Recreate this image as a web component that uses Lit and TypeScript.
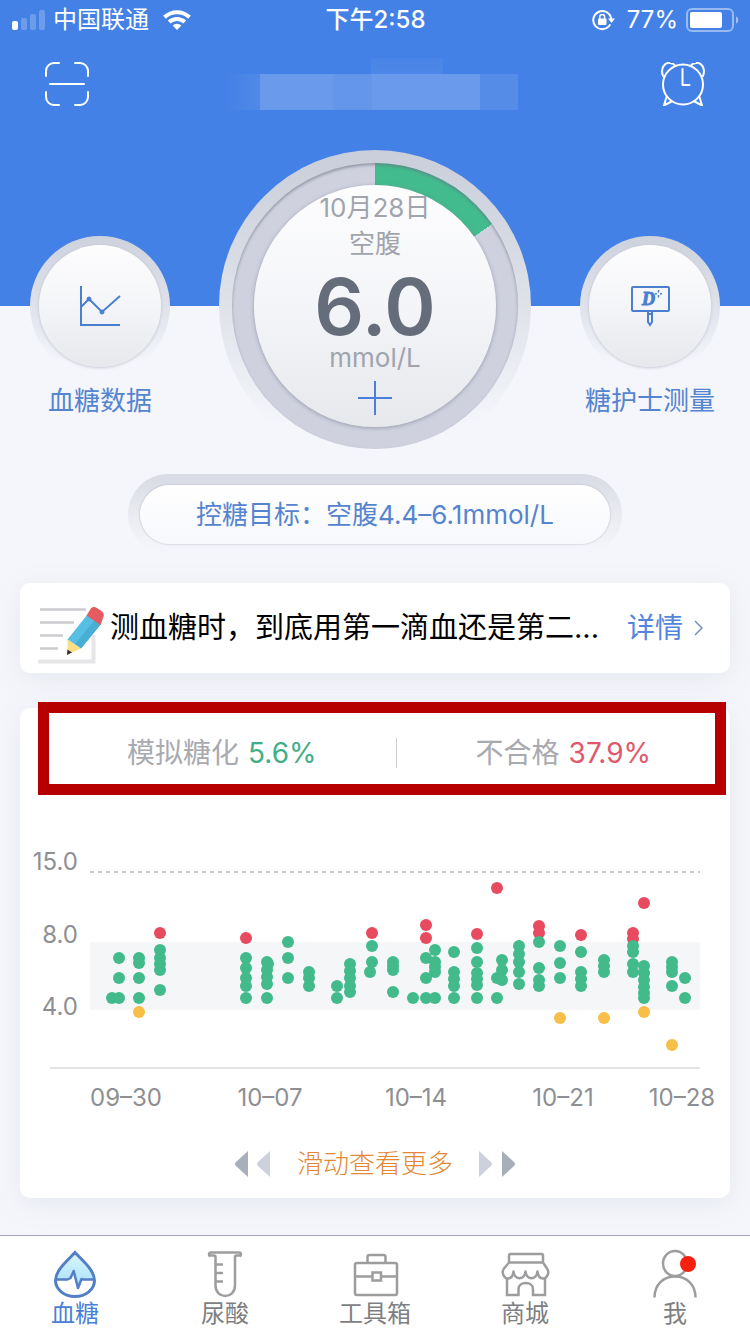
import { LitElement, html, svg, css } from "lit";
import { customElement, property } from "lit/decorators.js";
import { classMap } from "lit/directives/class-map.js";

type Level = "ok" | "high" | "low";
interface Column { x: number; ok?: number[]; high?: number[]; low?: number[]; }

const COLUMNS: Column[] = [
  { x: 92, ok: [158] },
  { x: 99, ok: [118, 138, 158] },
  { x: 119, ok: [118, 123, 138, 158], low: [172] },
  { x: 140, high: [93], ok: [110, 118, 124, 130, 150] },
  { x: 226, high: [98], ok: [118, 128, 138, 146, 158] },
  { x: 247, ok: [122, 130, 137, 144, 158] },
  { x: 248, ok: [124] },
  { x: 268, ok: [102, 118, 138] },
  { x: 289, ok: [132, 138, 146] },
  { x: 317, ok: [146, 158] },
  { x: 330, ok: [124, 131, 138, 146, 152] },
  { x: 350, ok: [132] },
  { x: 352, high: [93], ok: [106, 122] },
  { x: 373, ok: [122, 126, 130, 152] },
  { x: 393, ok: [158] },
  { x: 406, high: [85, 98], ok: [118, 138, 158] },
  { x: 415, ok: [110, 122, 127, 132, 158] },
  { x: 434, ok: [112, 132, 139, 146, 158] },
  { x: 457, high: [94], ok: [108, 122, 133, 139, 145, 158] },
  { x: 477, high: [48], ok: [138, 158] },
  { x: 482, ok: [120, 130, 140] },
  { x: 499, ok: [106, 114, 122, 132, 144] },
  { x: 519, high: [86, 93], ok: [102, 128, 140, 146] },
  { x: 540, ok: [106, 123, 138], low: [178] },
  { x: 561, high: [95], ok: [112, 132, 139, 146] },
  { x: 584, ok: [120, 126, 132], low: [178] },
  { x: 613, high: [93, 99], ok: [106, 112, 124, 132] },
  { x: 624, high: [63], ok: [126, 133, 140, 147, 153, 158], low: [172] },
  { x: 652, ok: [122, 127, 132, 146], low: [205] },
  { x: 665, ok: [138, 158] },
];
const LEVELS: Level[] = ["high", "ok", "low"];

@customElement("status-bar")
class StatusBar extends LitElement {
  static styles = css`
    :host { display: flex; align-items: center; height: 40px; padding: 0 11px 0 12px; color: #fff; font-size: 24px; line-height: 32px; }
    .side { flex: 1; display: flex; align-items: center; gap: 8px; }
    .end { justify-content: flex-end; }
    .carrier { margin-right: 6px; }
    .time { font-weight: 500; }
    .percent { margin-left: 4px; }
    svg { display: block; flex: none; }
  `;
  render() {
    return html`
      <div class="side">
        <svg width="33" height="22" viewBox="0 0 33 22" fill="#fff">
          <rect x="0" y="12" width="6" height="9" rx="2"/>
          <g fill-opacity=".22"><rect x="9" y="9" width="6" height="12" rx="2"/><rect x="18" y="5" width="6" height="16" rx="2"/><rect x="27" y="1" width="6" height="20" rx="2"/></g>
        </svg>
        <span class="carrier">中国联通</span>
        <svg width="28" height="20" viewBox="0 0 28 20" fill="none" stroke="#fff" stroke-width="4">
          <path d="M1.5 7.2a18 18 0 0 1 25 0"/><path d="M6.2 12a11.3 11.3 0 0 1 15.6 0"/>
          <path d="M14 20l-4.4-4.4a6.4 6.4 0 0 1 8.8 0z" fill="#fff" stroke="none"/>
        </svg>
      </div>
      <span class="time">下午2:58</span>
      <div class="side end">
        <svg width="23" height="22" viewBox="0 0 23 22" fill="none" stroke="#fff" stroke-width="2">
          <path d="M18.200 15.400A9 9 0 1 1 19.200 10"/><path d="M16 9.500h7l-3.500 4.500z" fill="#fff" stroke="none"/>
          <rect x="6" y="9.500" width="8.500" height="6.500" rx="1" fill="#fff" stroke="none"/><path d="M7.800 10V7.800a2.400 2.400 0 0 1 4.800 0V10" stroke-width="1.500"/>
        </svg>
        <span class="percent">77%</span>
        <svg width="53" height="24" viewBox="0 0 53 24">
          <rect x="1" y="1" width="46" height="22" rx="5" fill="none" stroke="#fff" stroke-opacity=".45" stroke-width="2"/>
          <rect x="4" y="4" width="32" height="16" rx="2" fill="#fff"/>
          <path d="M50 8.500c3 1 3 6 0 7z" fill="#fff" fill-opacity=".5"/>
        </svg>
      </div>`;
  }
}

@customElement("glucose-chart")
class GlucoseChart extends LitElement {
  static styles = css`
    :host { display: block; }
    svg { display: block; width: 100%; }
    text { font-size: 24px; fill: #8e8f93; }
    .band { fill: #f5f6f8; }
    .limit { stroke: #c8c8cc; stroke-width: 2; stroke-dasharray: 4 4; }
    .axis { stroke: #e3e3e5; stroke-width: 2; }
    .ok { fill: #42ba8c; }
    .high { fill: #e84a5f; }
    .low { fill: #f8bf48; }
  `;
  render() {
    const yLabels: [string, number][] = [["15.0", 30], ["8.0", 103], ["4.0", 175]];
    const xLabels: [string, number][] = [["09–30", 106], ["10–07", 250], ["10–14", 396], ["10–21", 543], ["10–28", 662]];
    return html`<svg viewBox="0 0 710 280" role="img" aria-label="血糖">
      <rect class="band" x="70" y="102" width="610" height="68"/>
      <path class="limit" d="M70 32H680"/>
      <path class="axis" d="M30 228H680"/>
      ${yLabels.map(([t, y]) => svg`<text x="58" y=${y} text-anchor="end">${t}</text>`)}
      ${xLabels.map(([t, x]) => svg`<text x=${x} y="266" text-anchor="middle">${t}</text>`)}
      ${COLUMNS.map(c => LEVELS.map(l => (c[l] ?? []).map(y => svg`<circle class=${l} cx=${c.x} cy=${y} r="6"/>`)))}
    </svg>`;
  }
}

@customElement("tab-item")
class TabItem extends LitElement {
  @property() label = "";
  @property() icon = "";
  @property({ type: Boolean }) active = false;
  static styles = css`
    :host { flex: 1; display: block; }
    a { display: flex; flex-direction: column; align-items: center; padding: 14px 0 4px; text-decoration: none; color: #7e7f82; font-size: 24px; line-height: 32px; }
    a.active { color: #4a80d6; }
    svg { display: block; overflow: visible; fill: none; stroke: #9d9d9f; stroke-width: 3; }
  `;
  private glyph() {
    switch (this.icon) {
      case "drop": return svg`
        <defs><linearGradient id="d" x1="0" y1="0" x2="0" y2="1"><stop offset="0" stop-color="#d8f6fd"/><stop offset="1" stop-color="#a9e0f8"/></linearGradient></defs>
        <path d="M24 3C19 10 5 20 5 29h15l3-7 4 16 4-9h12C43 20 29 10 24 3z" fill="url(#d)" stroke="none"/>
        <path d="M24 2.500C17 10 4.500 20 4.500 30.500a19.500 16 0 0 0 39 0C43.500 20 31 10 24 2.500z" stroke="#527fc6"/>
        <path d="M5 29.500h11.500l3-1.500 3.200-7 4.300 17 3.500-9 2 .5H43" stroke="#527fc6" stroke-width="2.500" stroke-linejoin="round"/>`;
      case "tube": return svg`
        <path d="M9 6.500C7.500 5 7.500 2.500 10 2.500h28c2.500 0 2.500 2.500 1 4M9 5.500h4c1 0 1.500.5 1.500 1.500V35.500c0 14 19.500 14 19.500 0V7c0-1 .5-1.500 1.500-1.500h3.500" stroke-width="2.500"/>
        <path d="M14.500 14.500H22M14.500 23H22M14.500 31.500H22" stroke-width="2.500"/>`;
      case "case": return svg`
        <rect x="4" y="13" width="42" height="32" rx="2" stroke-width="2.500"/>
        <path d="M16.500 13V7c0-1.500.8-2 2-2h14c1.200 0 2 .5 2 2v6M4 26.500h17.500M30 26.500h16" stroke-width="2.500"/>
        <rect x="21.500" y="22.500" width="8.500" height="8" stroke-width="2.500"/>`;
      case "shop": return svg`
        <rect x="8" y="4" width="34" height="8.500" rx="1.500" stroke-width="2.500"/>
        <path d="M8 12.500L3 18.500c-3 4 0 10 4 10 4 0 5-3 5.500-7 1 9 11 9 12 0 1 9 11 9 12 0 .5 4 1.500 7 5.500 7 4 0 7-6 4-10L42 12.500" stroke-width="2.500" stroke-linejoin="round"/>
        <path d="M6 28v17h11.500V39c0-8 14.500-8 14.500 0v6h12V28" stroke-width="2.500"/>`;
      default: return svg`
        <ellipse cx="24" cy="13.500" rx="12" ry="12.500" stroke-width="2.500"/>
        <path d="M3.500 47.500c0-13 9-21 20.500-21s20.500 8 20.500 21" stroke-width="2.500"/>
        <circle cx="37" cy="14" r="8" fill="#f5200f" stroke="none"/>`;
    }
  }
  render() {
    return html`<a href="#" class=${classMap({ active: this.active })}>
      <svg width="48" height="48" viewBox="0 0 48 48">${this.glyph()}</svg>${this.label}</a>`;
  }
}

@customElement("app-root")
class AppRoot extends LitElement {
  static styles = css`
    :host {
      display: flex; flex-direction: column; min-height: 100vh; box-sizing: border-box;
      background: linear-gradient(#4481e6 306px, #f4f6fb 306px);
      font-family: Inter, "Noto Sans CJK SC", sans-serif; font-weight: 400;
    }
    *, *::before, *::after { box-sizing: border-box; }
    button { appearance: none; border: 0; padding: 0; margin: 0; background: none; color: inherit; font: inherit; }
    svg { display: block; flex: none; }
    .header { display: flex; align-items: center; justify-content: space-between; height: 88px; padding: 0 45px; }
    .blurred {
      width: 293px; height: 52px; margin-right: 8px;
      background:
        linear-gradient(90deg, transparent 0, #fff1 12%, #fff3 12%, #fff3 37%, #ffffff2b 37%, #ffffff2b 50%, #fff3 50%, #fff3 87%, #ffffff17 87%) 0 100% / 100% 36px no-repeat,
        linear-gradient(#ffffff08, #ffffff0c) 146px 0 / 72px 16px no-repeat;
    }
    .hero { display: grid; grid-template-columns: 200px 1fr 200px; margin-top: 22px; }
    .shortcut { display: flex; flex-direction: column; align-items: center; padding-top: 86px; color: #5584cf; font-size: 26px; line-height: 34px; gap: 8px; }
    .knob { width: 140px; height: 140px; border-radius: 50%; display: grid; place-items: center; background: linear-gradient(#ced2dd, #dfe2ea 50%, #f4f6fb 90%); }
    .face { border-radius: 50%; display: flex; flex-direction: column; align-items: center; background: linear-gradient(#fdfdfe, #f4f5f8 50%, #e6e8ec); }
    .knob .face { width: 122px; height: 122px; justify-content: center; box-shadow: 0 1px 3px #9a9eac88; }
    .dial { justify-self: center; width: 312px; height: 312px; border-radius: 50%; display: grid; place-items: center; background: linear-gradient(#c9ceda, #dfe2e9 50%, #f4f6fb 88%); }
    .ring { width: 286px; height: 286px; border-radius: 50%; display: grid; place-items: center; background: conic-gradient(#42bb8e 55deg, #cfd1df 55deg); box-shadow: inset 0 2px 3px #6d728299; }
    .ring .face { width: 242px; height: 242px; padding-top: 5px; color: #a0a4ad; font-size: 26px; line-height: 36px; box-shadow: 0 1px 4px #7d8292aa; }
    .value { margin-top: 6px; font-size: 78px; line-height: 78px; font-weight: 600; color: #656d7b; }
    .unit { line-height: 24px; }
    .plus { margin-top: 11px; }
    .target { align-self: center; margin-top: 12px; padding: 11px 12px; border-radius: 40px; background: linear-gradient(#d9dbe4, #e9ebf1 50%, #f4f6fb 95%); }
    .target-face { display: block; height: 59px; padding: 0 56px; border-radius: 30px; background: linear-gradient(#fff, #f7f8fc); box-shadow: 0 0 2px #a3a8b6; font-size: 26px; line-height: 59px; color: #5584cf; white-space: nowrap; }
    .card { margin: 0 20px; background: #fff; border-radius: 10px; box-shadow: 0 6px 28px #888ca61f; }
    .news { margin-top: 28px; height: 90px; padding: 0 27px 0 18px; display: flex; align-items: center; font-size: 28px; line-height: 40px; text-decoration: none; color: #000; white-space: nowrap; }
    .title { flex: 1; margin-left: 4px; font-size: 29px; }
    .more { color: #5584dc; margin-right: 11px; }
    .report { margin-top: 35px; }
    .stats { position: relative; display: flex; align-items: center; justify-content: space-between; height: 90px; padding: 0 79px 0 107px; font-size: 28px; line-height: 40px; color: #a8aab0; }
    .stats::after { content: ""; position: absolute; inset: -6px 4px 3px 18px; border: 11px solid #b60000; }
    .stat { display: flex; align-items: baseline; gap: 9px; }
    .good { color: #42ae88; }
    .bad { color: #e0586c; }
    .divider { width: 1px; height: 30px; background: #cfd0d4; }
    .chart { margin-top: 42px; }
    .hint { display: flex; align-items: center; justify-content: center; height: 68px; margin-top: 10px; gap: 26px; font-size: 26px; line-height: 34px; font-weight: 300; color: #e38836; }
    .tabs { display: flex; margin-top: auto; background: #fff; border-top: 1px solid #a6a6c2; }
  `;
  render() {
    return html`
      <status-bar></status-bar>
      <div class="header">
        <button aria-label="扫描">
          <svg width="44" height="44" viewBox="0 0 44 44" fill="none" stroke="#fff" stroke-width="2" stroke-linecap="round">
            <path d="M1 14V9a8 8 0 0 1 8-8h5M30 1h5a8 8 0 0 1 8 8v5M43 30v5a8 8 0 0 1-8 8h-5M14 43H9a8 8 0 0 1-8-8v-5M5 22h34"/>
          </svg>
        </button>
        <div class="blurred"></div>
        <button aria-label="提醒">
          <svg width="44" height="44" viewBox="0 0 44 44" fill="none" stroke="#fff" stroke-width="2" stroke-linecap="round" stroke-linejoin="round">
            <circle cx="22" cy="22.500" r="20"/><path d="M21.500 7v16h7"/>
            <path d="M2 14C-1 6 4 0 9 1c3 .3 4.500 1.500 5.500 3M42 14c3-8-2-14-7-13-3 .3-4.500 1.500-5.500 3"/>
            <path d="M5.500 35L3 43.500l7.500-4M38.500 35l2.500 8.500-7.500-4"/>
          </svg>
        </button>
      </div>
      <div class="hero">
        <button class="shortcut">
          <span class="knob"><span class="face">
            <svg width="44" height="44" viewBox="0 0 44 44" fill="none" stroke="#4a7fcf" stroke-width="2">
              <path d="M3 2v39h39M3 23l8-8 13 13 18-16"/><circle cx="11" cy="15" r="2" fill="#4a7fcf" stroke-width="1"/><circle cx="24" cy="28" r="2" fill="#4a7fcf" stroke-width="1"/>
            </svg>
          </span></span>
          <span>血糖数据</span>
        </button>
        <button class="dial">
          <span class="ring"><span class="face">
            <span>10月28日</span>
            <span>空腹</span>
            <span class="value">6.0</span>
            <span class="unit">mmol/L</span>
            <svg class="plus" width="34" height="34" viewBox="0 0 34 34" stroke="#4a7fdc" stroke-width="2"><path d="M17 0v34M0 17h34"/></svg>
          </span></span>
        </button>
        <button class="shortcut">
          <span class="knob"><span class="face">
            <svg width="44" height="44" viewBox="0 0 44 44" fill="none" stroke="#4a7fcf" stroke-width="2">
              <rect x="4" y="3" width="37" height="24" rx="1"/><path d="M20 27v11l2 3 2-3V27M20 30h4"/>
              <text x="14" y="21" font-family="Liberation Serif, serif" font-size="18" font-weight="700" font-style="italic" fill="#4a7fcf" stroke="#4a7fcf" stroke-width="1">D</text>
              <path d="M30.500 6v2.500M30.500 11v2.500M27 9.700h2M32 9.700h2" stroke-width="1.500"/>
            </svg>
          </span></span>
          <span>糖护士测量</span>
        </button>
      </div>
      <button class="target"><span class="target-face">控糖目标：空腹4.4–6.1mmol/L</span></button>
      <a class="card news" href="#">
        <svg width="68" height="74" viewBox="0 -14 68 74">
          <path d="M0 56.500h55.500V30" fill="none" stroke="#e6e6e8" stroke-width="4"/>
          <path d="M2 4.500h46M2 17.500h34M2 30.500h23M2 43.500h18" stroke="#cbcccf" stroke-width="2.500"/>
          <path d="M49 10l14 9-20 24.500-13.500-9z" fill="#56bfe2"/>
          <path d="M57 14.500l6 4.500-20 24.500-6-4.500z" fill="#49aed3"/>
          <path d="M48.500 10.500l4-6.500c1.500-2 4-2.500 6-1.200l5 3.200c2.500 1.500 3 4.500 1.500 7L62.500 20z" fill="#e65b60"/>
          <path d="M29.500 34.500l13.500 9-13.500 6z" fill="#fbdf84"/><path d="M29.500 44.500l4.500 3-5 2.500z" fill="#33302e"/>
        </svg>
        <span class="title">测血糖时，到底用第一滴血还是第二...</span>
        <span class="more">详情</span>
        <svg width="9" height="16" viewBox="0 0 9 16" fill="none" stroke="#6f8fb8" stroke-width="1.500"><path d="M1 1l7 7-7 7"/></svg>
      </a>
      <section class="card report">
        <div class="stats">
          <span class="stat">模拟糖化<span class="good">5.6%</span></span>
          <span class="divider"></span>
          <span class="stat">不合格<span class="bad">37.9%</span></span>
        </div>
        <glucose-chart class="chart"></glucose-chart>
        <div class="hint">
          <svg width="36" height="26" viewBox="0 0 36 26"><path d="M13 0v26L1 15q-2-2 0-4z" fill="#a9aebb"/><path d="M35 0v26L23 15q-2-2 0-4z" fill="#cdd1dc"/></svg>
          <span>滑动查看更多</span>
          <svg width="36" height="26" viewBox="0 0 36 26"><path d="M0 0v26l12-11q2-2 0-4z" fill="#cdd1dc"/><path d="M23 0v26l12-11q2-2 0-4z" fill="#a9aebb"/></svg>
        </div>
      </section>
      <nav class="tabs">
        <tab-item icon="drop" label="血糖" active></tab-item>
        <tab-item icon="tube" label="尿酸"></tab-item>
        <tab-item icon="case" label="工具箱"></tab-item>
        <tab-item icon="shop" label="商城"></tab-item>
        <tab-item icon="me" label="我"></tab-item>
      </nav>`;
  }
}
